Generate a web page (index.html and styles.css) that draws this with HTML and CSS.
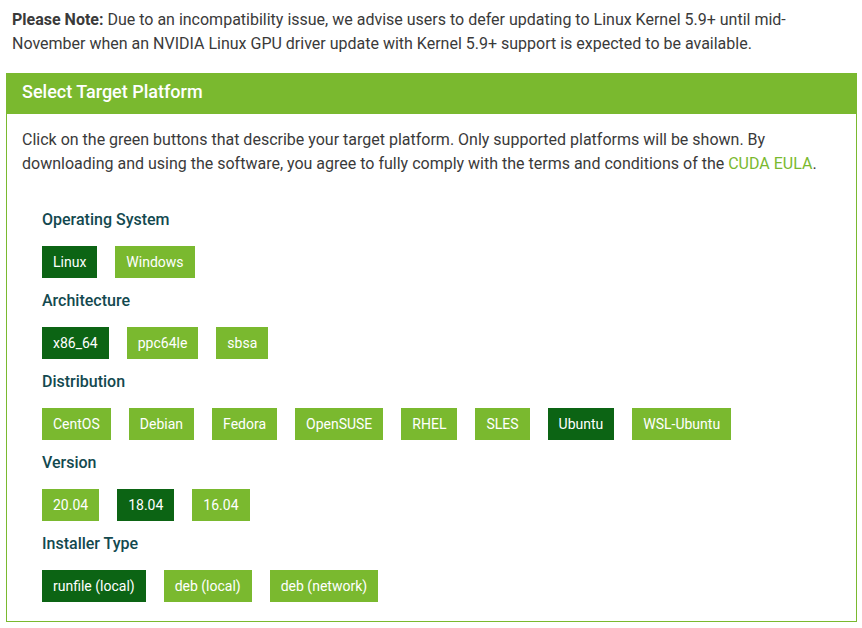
FILE: index.html
```
<!DOCTYPE html>
<html lang="en">
<head>
<meta charset="utf-8">
<title>Select Target Platform</title>
<link rel="stylesheet" href="styles.css">
</head>
<body>
<p class="note"><strong>Please Note:</strong> Due to an incompatibility issue, we advise users to defer updating to Linux Kernel 5.9+ until mid-November when an NVIDIA Linux GPU driver update with Kernel 5.9+ support is expected to be available.</p>
<main class="panel">
<h1 class="panel-title">Select Target Platform</h1>
<p class="intro">Click on the green buttons that describe your target platform. Only supported platforms will be shown. By downloading and using the software, you agree to fully comply with the terms and conditions of the <a href="#eula">CUDA EULA</a>.</p>
<div class="groups">
<section class="group"><h2>Operating System</h2><div class="options"><button class="selected">Linux</button><button>Windows</button></div></section>
<section class="group"><h2>Architecture</h2><div class="options"><button class="selected">x86_64</button><button>ppc64le</button><button>sbsa</button></div></section>
<section class="group"><h2>Distribution</h2><div class="options"><button>CentOS</button><button>Debian</button><button>Fedora</button><button>OpenSUSE</button><button>RHEL</button><button>SLES</button><button class="selected">Ubuntu</button><button>WSL-Ubuntu</button></div></section>
<section class="group"><h2>Version</h2><div class="options"><button>20.04</button><button class="selected">18.04</button><button>16.04</button></div></section>
<section class="group"><h2>Installer Type</h2><div class="options"><button class="selected">runfile (local)</button><button>deb (local)</button><button>deb (network)</button></div></section>
</div>
</main>
</body>
</html>
```
FILE: styles.css
```
* { box-sizing: border-box; }
body { margin: 0; padding: 8px 5px 6px 6px; background: #fff; color: #3a3a3a; font: 16px/24px Roboto, "Liberation Sans", sans-serif; }
p, h1, h2 { margin: 0; }
.note { padding: 0 6px; margin-bottom: 17px; }
.panel { border: 1px solid #7ab92f; }
.panel-title { background: #7ab92f; color: #fff; font-size: 18px; font-weight: 500; line-height: 24px; padding: 6px 15px 10px; }
.intro { padding: 14px 15px 0; }
a { color: #7ab92f; text-decoration: none; }
.groups { padding: 32px 35px 19px; display: grid; gap: 11px; }
h2 { color: #13494f; font-size: 16px; font-weight: 500; line-height: 24px; margin-bottom: 14px; }
.options { display: flex; flex-wrap: wrap; gap: 18px; }
button { border: 0; border-radius: 0; background: #7ab92f; color: #fff; font: 14px/20px Roboto, "Liberation Sans", sans-serif; padding: 6px 11px; }
.selected { background: #0c6414; }
```
